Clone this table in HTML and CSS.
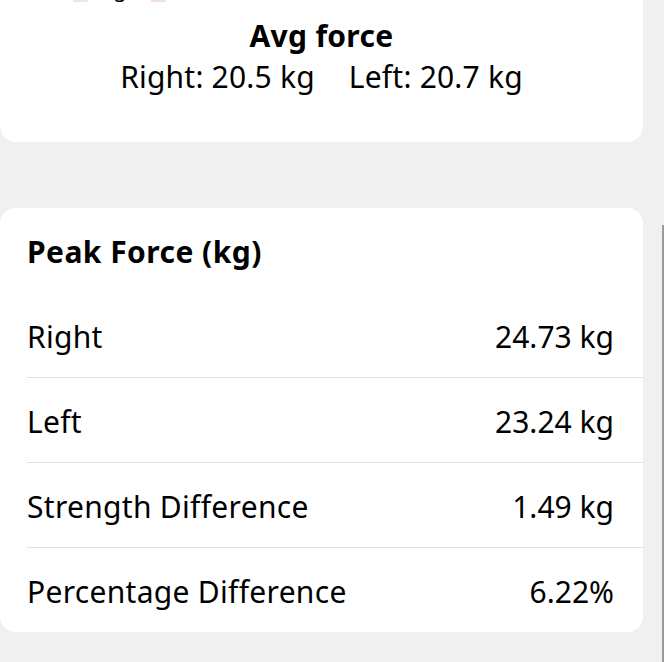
FILE: index.html
```html
<!DOCTYPE html>
<html>
<head>
<meta charset="utf-8">
<link rel="stylesheet" href="styles.css">
</head>
<body>
<div class="page">
  <section class="card summary">
    <div class="legend">
      <span class="legend-item"><span class="swatch swatch-right"></span>Right</span>
      <span class="legend-item"><span class="swatch swatch-left"></span>Left</span>
    </div>
    <div class="avg-title">Avg force</div>
    <div class="avg-values">
      <span>Right: 20.5 kg</span>
      <span>Left: 20.7 kg</span>
    </div>
  </section>

  <section class="card peak">
    <div class="peak-title">Peak Force (kg)</div>
    <div class="row"><span class="label">Right</span><span>24.73 kg</span></div>
    <div class="row"><span class="label">Left</span><span>23.24 kg</span></div>
    <div class="row"><span class="label">Strength Difference</span><span>1.49 kg</span></div>
    <div class="row"><span class="label">Percentage Difference</span><span>6.22%</span></div>
  </section>
  <div class="scrollbar"></div>
</div>
</body>
</html>
```

FILE: styles.css
```css
html, body {
  margin: 0;
  padding: 0;
}
body {
  background: #f0f0f0;
  font-family: "Noto Sans", "Open Sans", sans-serif;
  color: #000;
  font-size: 30px;
  line-height: 41px;
}
.page {
  position: relative;
  width: 664px;
  height: 662px;
  overflow: hidden;
}
.card {
  background: #fff;
  width: 643px;
  border-radius: 16px;
  box-sizing: border-box;
}
.summary {
  margin-top: -40px;
  padding-bottom: 45px;
  text-align: center;
}
.legend {
  display: flex;
  height: 43px;
  align-items: flex-end;
  padding-left: 73px;
  gap: 3px;
  font-size: 22px;
  line-height: 30px;
  margin-bottom: 12px;
}
.legend-item {
  display: flex;
  align-items: center;
  gap: 6px;
}
.swatch {
  display: inline-block;
  width: 15px;
  height: 15px;
  position: relative;
  top: 6px;
}
.swatch-right {
  background: #dfe9f8;
}
.swatch-left {
  background: #fadde1;
}
.avg-title {
  font-weight: 700;
  letter-spacing: 0.3px;
}
.avg-values {
  display: flex;
  justify-content: center;
  gap: 34px;
  letter-spacing: 0.2px;
}
.peak {
  margin-top: 66px;
  padding: 23px 29px 0 27px;
}
.peak-title {
  font-weight: 700;
  letter-spacing: 0.45px;
  padding-bottom: 21px;
}
.row {
  display: flex;
  justify-content: space-between;
  padding: 23px 29px 20px 0;
  margin-right: -29px;
}
.label {
  letter-spacing: 0.3px;
}
.row + .row {
  border-top: 1px solid #e0e0e0;
}
.scrollbar {
  position: absolute;
  right: 0;
  top: 225px;
  bottom: 0;
  width: 2px;
  background: #9a9a9a;
}
```
